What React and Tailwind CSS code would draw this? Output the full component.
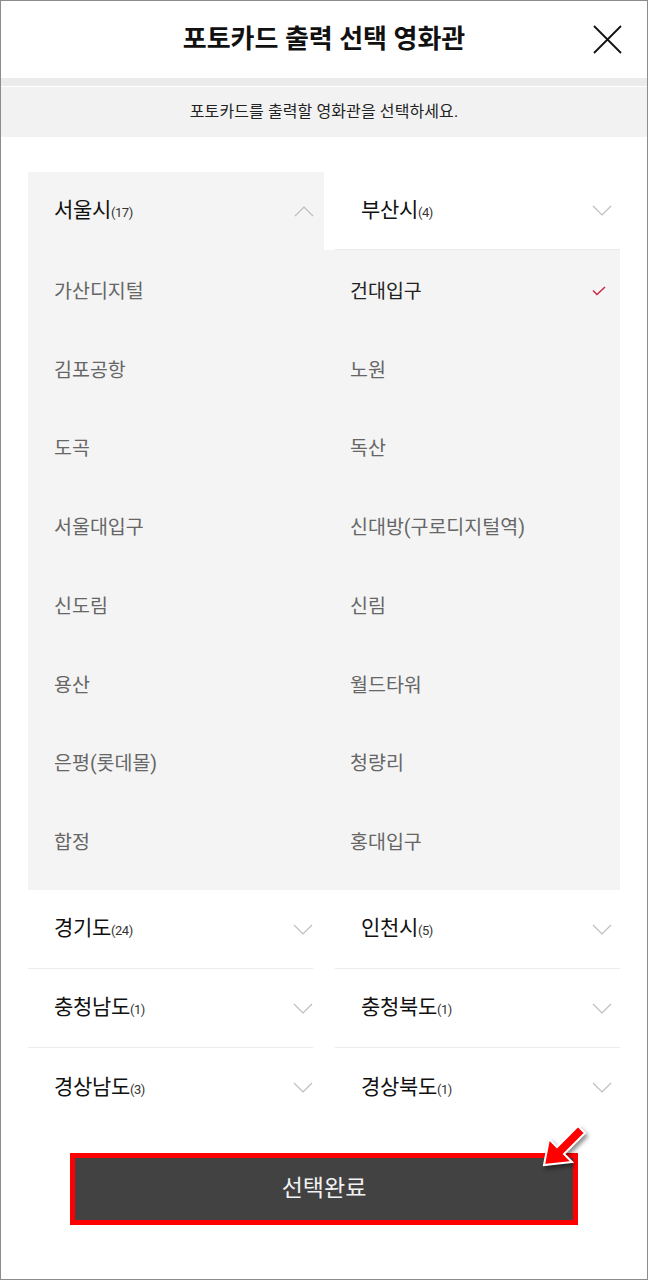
import { useState } from "react";

const seoul = ["가산디지털", "김포공항", "도곡", "서울대입구", "신도림", "용산", "은평(롯데몰)", "합정"];
const seoul2 = ["건대입구", "노원", "독산", "신대방(구로디지털역)", "신림", "월드타워", "청량리", "홍대입구"];

const regionRows = [
  [
    { name: "경기도", count: 24 },
    { name: "인천시", count: 5 },
  ],
  [
    { name: "충청남도", count: 1 },
    { name: "충청북도", count: 1 },
  ],
  [
    { name: "경상남도", count: 3 },
    { name: "경상북도", count: 1 },
  ],
];

function Chevron({ up = false }) {
  return (
    <svg width="20" height="11" viewBox="0 0 20 11" fill="none" className="shrink-0">
      <path
        d={up ? "M1 10 L10 1 L19 10" : "M1 1 L10 10 L19 1"}
        stroke="#bdbdbd"
        strokeWidth="1.2"
      />
    </svg>
  );
}

function RegionLabel({ name, count }) {
  return (
    <span className="flex items-baseline text-[21px] text-[#111] tracking-[-0.3px]">
      {name}
      <span className="text-[13px] text-[#333] tracking-[-0.5px]">({count})</span>
    </span>
  );
}

function App() {
  const [selected, setSelected] = useState("건대입구");

  return (
    <div className="w-[648px] h-[1280px] bg-white border border-[#8c8c8c] font-['Roboto','Noto_Sans_CJK_KR',sans-serif] overflow-hidden">
      <div className="relative h-[77px] flex items-center justify-center">
        <h1 className="text-[26px] font-bold text-[#111]">포토카드 출력 선택 영화관</h1>
        <button className="absolute right-[25px] top-[24px] w-[29px] h-[29px]">
          <svg width="29" height="29" viewBox="0 0 29 29" fill="none">
            <path d="M1 1 L28 28 M28 1 L1 28" stroke="#111" strokeWidth="1.8" />
          </svg>
        </button>
      </div>
      <div className="h-[8px] bg-[#ebebeb]" />
      <div className="h-px bg-white" />
      <div className="h-[50px] bg-[#f2f2f2] flex items-center justify-center">
        <p className="text-[16px] text-[#222] tracking-[0.1px]">포토카드를 출력할 영화관을 선택하세요.</p>
      </div>

      <div className="px-[27px] pt-[35px]">
        <div className="flex justify-between">
          <div className="w-[296px] h-[78px] bg-[#f4f4f4] flex items-center justify-between pl-[26px] pr-[10px]">
            <RegionLabel name="서울시" count={17} />
            <Chevron up />
          </div>
          <div className="w-[285px] h-[78px] border-b border-[#ebebeb] flex items-center justify-between pl-[26px] pr-[8px]">
            <RegionLabel name="부산시" count={4} />
            <Chevron />
          </div>
        </div>

        <div className="grid grid-cols-2 bg-[#f4f4f4] pt-[2px] pb-[8px]">
          <div className="flex flex-col">
            {seoul.map((t) => (
              <button
                key={t}
                onClick={() => setSelected(t)}
                className={`h-[78.75px] flex items-center pl-[26px] text-[19.5px] ${selected === t ? "text-[#222]" : "text-[#666]"}`}
              >
                {t}
              </button>
            ))}
          </div>
          <div className="flex flex-col">
            {seoul2.map((t) => (
              <button
                key={t}
                onClick={() => setSelected(t)}
                className={`h-[78.75px] flex items-center justify-between pl-[26px] pr-[14px] text-[19.5px] ${selected === t ? "text-[#222]" : "text-[#666]"}`}
              >
                {t}
                {selected === t && (
                  <svg width="14" height="10" viewBox="0 0 14 10" fill="none">
                    <path d="M1 4.5 L5 8.5 L13 1" stroke="#c4294a" strokeWidth="1.5" />
                  </svg>
                )}
              </button>
            ))}
          </div>
        </div>

        {regionRows.map((row, i) => (
          <div key={i} className="flex justify-between">
            {row.map((r, j) => (
              <div
                key={r.name}
                className={`w-[285px] h-[79px] flex items-center justify-between pl-[26px] ${j === 0 ? "pr-0" : "pr-[8px]"} ${i < regionRows.length - 1 ? "border-b border-[#ececec]" : ""}`}
              >
                <RegionLabel name={r.name} count={r.count} />
                <Chevron />
              </div>
            ))}
          </div>
        ))}
      </div>

      <div className="flex justify-center pt-[26px]">
        <div className="relative">
          <button className="w-[508px] h-[72px] border-[5px] border-[#ff0000] bg-[#424242] text-[#f2f2f2] text-[23px] flex items-center justify-center">
            선택완료
          </button>
          <svg
            className="absolute left-[468px] top-[-30px] drop-shadow-[2px_3px_2px_rgba(0,0,0,0.45)]"
            width="56"
            height="50"
            viewBox="0 0 56 50"
            fill="none"
          >
            <polygon
              points="6,42 11,16 19,24 40,3 47,10 26,31 34,39"
              fill="#ff0000"
              stroke="#ffffff"
              strokeWidth="2"
              strokeLinejoin="miter"
            />
          </svg>
        </div>
      </div>
    </div>
  );
}

export default App;
